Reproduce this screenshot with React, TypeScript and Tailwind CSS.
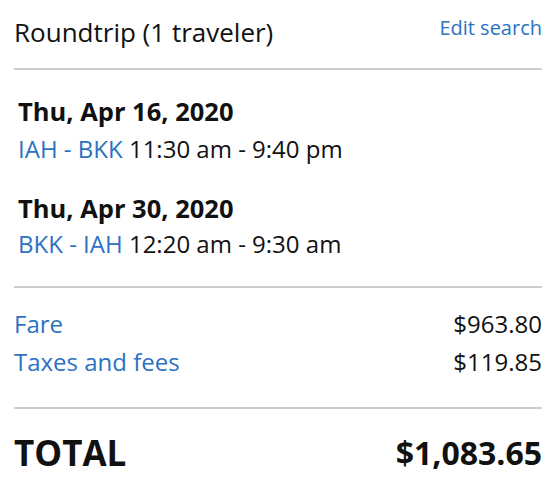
export default function App() {
  const font = { fontFamily: '"Open Sans", "Noto Sans", sans-serif' };
  return (
    <div className="w-[560px] h-[480px] bg-white overflow-hidden text-[#111]" style={font}>
      <div className="pl-[14px] pr-[18px]">
        <div className="flex items-start justify-between pt-[14px] h-[68px]">
          <div className="text-[26px] leading-[36px]">Roundtrip (1 traveler)</div>
          <a className="text-[20px] leading-[26px] text-[#2b72c2] pt-[1px]">Edit search</a>
        </div>
        <div className="h-[2px] bg-[#cccccc]" />
        <div className="pl-[4px] pt-[23px]">
          <div className="text-[25.5px] font-bold leading-[36px]">Thu, Apr 16, 2020</div>
          <div className="text-[24px] leading-[36px] mt-[2px]">
            <span className="text-[#2b72c2]">IAH - BKK</span> 11:30 am - 9:40 pm
          </div>
          <div className="text-[25.5px] font-bold leading-[36px] mt-[23px]">Thu, Apr 30, 2020</div>
          <div className="text-[24px] leading-[36px] mt-[0px]">
            <span className="text-[#2b72c2]">BKK - IAH</span> 12:20 am - 9:30 am
          </div>
        </div>
        <div className="h-[2px] bg-[#cccccc] mt-[24px]" />
        <div className="pt-[17px]">
          <div className="flex justify-between text-[24px] leading-[38px]">
            <span className="text-[#2b72c2]">Fare</span>
            <span>$963.80</span>
          </div>
          <div className="flex justify-between text-[24px] leading-[38px]">
            <span className="text-[#2b72c2]">Taxes and fees</span>
            <span>$119.85</span>
          </div>
        </div>
        <div className="h-[2px] bg-[#cccccc] mt-[26px]" />
        <div className="flex justify-between items-center font-bold pt-[22px]">
          <span className="text-[35px] leading-[44px]">TOTAL</span>
          <span className="text-[32px] leading-[44px]">$1,083.65</span>
        </div>
      </div>
    </div>
  );
}
